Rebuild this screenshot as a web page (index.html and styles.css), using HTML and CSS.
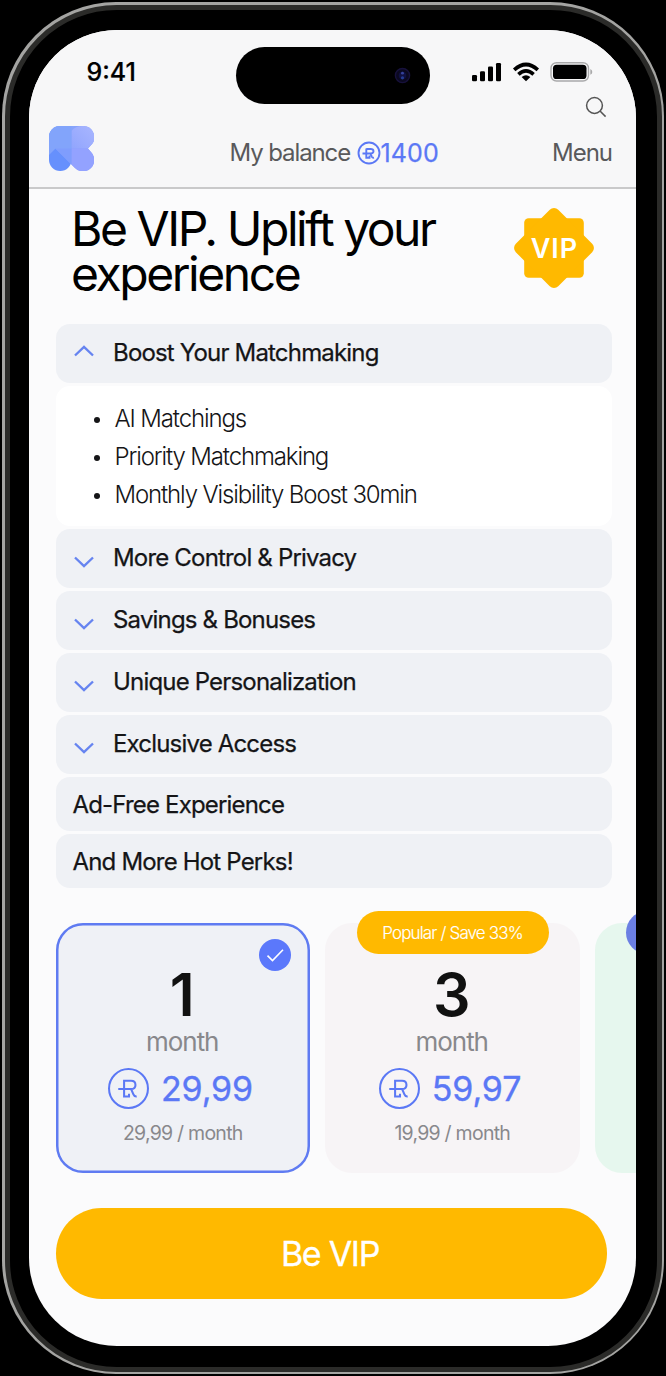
FILE: index.html
```html
<!DOCTYPE html>
<html lang="en">
<head>
<meta charset="utf-8">
<title>Be VIP</title>
<link rel="stylesheet" href="styles.css">
</head>
<body>
<svg class="defs" aria-hidden="true">
  <symbol id="coin" viewBox="0 0 40 40">
    <circle cx="20" cy="20" r="19" fill="none" stroke="currentColor" stroke-width="2"/>
    <path d="M10 20.500H22.500M15.700 12.500H22.500Q26.800 12.500 26.800 16.500T22.500 20.500L24.800 25.800Q25.600 28 28 27.800M15.700 11.500V27.800H20.500V25" fill="none" stroke="currentColor" stroke-width="2"/>
  </symbol>
  <symbol id="chevron" viewBox="0 0 20 12">
    <path d="M1 1.500L10 10L19 1.500" fill="none" stroke="currentColor" stroke-width="2.400"/>
  </symbol>
</svg>
<div class="phone">
 <div class="bezel">
  <main class="screen">
   <header class="header">
    <div class="status">
      <span class="time">9:41</span>
      <div class="island"><svg class="camera" viewBox="0 0 18 18"><circle cx="9" cy="9" r="7.500" fill="#0b0920" stroke="#17113c" stroke-width="1.500"/><circle cx="9" cy="9" r="4" fill="#101040"/><circle cx="9" cy="6.500" r="1.500" fill="#35429b"/><circle cx="9" cy="11.500" r="1.700" fill="#243b91"/></svg></div>
      <svg class="signals" viewBox="0 0 122 20">
        <g fill="#000">
          <rect x="0" y="13" width="5" height="6.300" rx="1.300"/><rect x="8" y="9.300" width="5" height="10" rx="1.300"/><rect x="16" y="4.500" width="5" height="14.800" rx="1.300"/><rect x="24" y="1" width="5" height="18.300" rx="1.300"/>
          <path d="M54 19.300L49.600 14.900Q54 11.600 58.400 14.900Z"/>
        </g>
        <g fill="none" stroke="#000" stroke-width="3.600"><path d="M42.200 7.900Q54 -2.900 65.800 7.900"/><path d="M46.400 12.400Q54 5.400 61.600 12.400"/></g>
        <rect x="79" y=".7" width="37.500" height="18.300" rx="5.500" fill="none" stroke="#a9a9aa" stroke-width="1.400"/>
        <rect x="81" y="2.700" width="33.500" height="14.300" rx="3.600"/>
        <path d="M118.300 7Q120.300 8 120.300 9.900T118.300 12.800Z" fill="#a9a9aa"/>
      </svg>
    </div>
    <div class="search-row"><svg class="search" viewBox="0 0 22 22"><circle cx="9.500" cy="9.500" r="7.900"/><path d="M15 15L20.600 20.600"/></svg></div>
    <nav class="nav">
      <svg class="logo" viewBox="0 0 45 45">
        <defs>
          <linearGradient id="band" x1="0" y1="0" x2="1" y2="1"><stop offset="0" stop-color="#88abfb"/><stop offset=".45" stop-color="#87a0fc"/><stop offset="1" stop-color="#8f9eff"/></linearGradient>
          <linearGradient id="lobe" x1="0" y1="1" x2="1" y2="0"><stop offset="0" stop-color="#91a5fd"/><stop offset="1" stop-color="#a9b6ff"/></linearGradient>
        </defs>
        <rect width="22.500" height="45" rx="11.200" fill="#6690fd"/>
        <path d="M11.200 0H34A11.200 11.200 0 0 1 42 19.200L39 22.500L42 26A11.200 11.200 0 1 1 26 42L3.200 19.200A11.200 11.200 0 0 1 11.200 0Z" fill="url(#band)"/>
        <path d="M22.500 5Q26 0 34 0A11.200 11.200 0 0 1 42 19.200L38.800 22.500H22.500Z" fill="url(#lobe)"/>
        <path d="M22.500 22.500H38.800L42 26A11.200 11.200 0 1 1 26 42L22.500 38.500Z" fill="#93a2ff"/>
        <path d="M0 11.200A11.200 11.200 0 0 1 11.200 0H22.500V22.500H6.500L0 29Z" fill="#82a4fb"/>
        <path d="M6.500 22.500H22.500V38.500Z" fill="#7f9dfd"/>
      </svg>
      <p class="balance"><span class="balance-label">My balance</span><svg class="coin-small" viewBox="0 0 24 24"><circle cx="12" cy="12" r="10.500"/><path d="M5.500 12.500H13.500M9.300 8H13.500Q16.500 8 16.500 10.200T13.500 12.500L14.900 15.800Q15.500 17 17 16.600M9.300 7.500V16.700H12.500V14.500"/></svg><b>1400</b></p>
      <span class="menu">Menu</span>
    </nav>
   </header>

   <section class="hero">
     <h1>Be VIP. Uplift your<br>experience</h1>
     <div class="badge">
       <svg viewBox="0 0 82 82"><g fill="#ffb900"><rect x="11.200" y="11.200" width="59.600" height="59.600" rx="4.500"/><rect x="11" y="11" width="60" height="60" rx="6" transform="rotate(45 41 41)"/></g></svg>
       <span>VIP</span>
     </div>
   </section>

   <section class="perks">
     <div class="perk"><svg class="chev up"><use href="#chevron"/></svg><span>Boost Your Matchmaking</span></div>
     <ul class="details"><li>AI Matchings</li><li>Priority Matchmaking</li><li>Monthly Visibility Boost 30min</li></ul>
     <div class="perk"><svg class="chev"><use href="#chevron"/></svg><span>More Control &amp; Privacy</span></div>
     <div class="perk"><svg class="chev"><use href="#chevron"/></svg><span>Savings &amp; Bonuses</span></div>
     <div class="perk"><svg class="chev"><use href="#chevron"/></svg><span>Unique Personalization</span></div>
     <div class="perk"><svg class="chev"><use href="#chevron"/></svg><span>Exclusive Access</span></div>
     <div class="perk plain"><span>Ad-Free Experience</span></div>
     <div class="perk plain"><span>And More Hot Perks!</span></div>
   </section>

   <section class="plans">
     <article class="plan selected">
       <svg class="check" viewBox="0 0 32 32"><circle cx="16" cy="16" r="16" fill="#5b78fb"/><path d="M8.500 16.700L13.500 21.500L24 10.700" fill="none" stroke="#fff" stroke-width="1.600"/></svg>
       <strong>1</strong><span class="unit">month</span>
       <div class="price"><svg><use href="#coin"/></svg><span>29,99</span></div>
       <small>29,99 / month</small>
     </article>
     <article class="plan rose">
       <span class="tag">Popular / Save 33%</span>
       <strong>3</strong><span class="unit">month</span>
       <div class="price"><svg><use href="#coin"/></svg><span>59,97</span></div>
       <small>19,99 / month</small>
     </article>
     <article class="plan mint"><span class="tag blue"></span></article>
   </section>

   <button class="cta">Be VIP</button>
  </main>
 </div>
</div>
</body>
</html>
```
FILE: styles.css
```css
* { box-sizing: border-box; }
body {
  margin: 0;
  padding: 2px;
  background: #000;
  font-family: Inter, "Liberation Sans", sans-serif;
  color: #151517;
}
h1, p, ul { margin: 0; padding: 0; }
.defs { position: absolute; width: 0; height: 0; }

.phone {
  width: 662px;
  height: 1372px;
  padding: 2.5px;
  border-radius: 114px;
  background: #a4a4a2;
}
.bezel {
  height: 100%;
  padding: 20.500px;
  padding-bottom: 21px;
  border: 5px solid #2b2b29;
  border-radius: 111.500px;
  background: #000;
}
.screen {
  height: 1315.500px;
  width: 607px;
  margin-left: -1px;
  border-radius: 88px;
  overflow: hidden;
  background: #fbfbfc;
}

.header {
  height: 158.500px;
  background: #f7f7f8;
  border-bottom: 2px solid #c9c9ca;
}
.status {
  display: grid;
  grid-template-columns: 207px 194px 1fr;
  height: 66px;
}
.time {
  padding: 27px 0 0 57.500px;
  font-size: 25px;
  line-height: 30px;
  font-weight: 500;
  letter-spacing: 0;
  color: #000;
  -webkit-text-stroke: .2px #000;
}
.island {
  height: 57px;
  margin-top: 17px;
  padding: 20px 0 0 158px;
  border-radius: 29px;
  background: #000;
}
.camera { display: block; width: 17px; height: 17px; }
.signals { width: 122px; height: 20px; margin: 31.500px 0 0 42px; }
.search-row { display: flex; justify-content: flex-end; height: 26px; padding-right: 29px; }
.search { width: 22px; height: 22px; fill: none; stroke: #555; stroke-width: 1.500; }
.nav {
  display: grid;
  grid-template-columns: 181px 1fr auto;
  align-items: start;
  padding: 4px 24px 0 19.500px;
  color: #59595b;
  font-size: 24px;
  line-height: 30px;
}
.logo { width: 45px; height: 45px; }
.balance { display: flex; align-items: center; padding-top: 11.500px; }
.balance-label { width: 127px; letter-spacing: -1.100px; white-space: nowrap; }
.coin-small { width: 24px; height: 24px; fill: none; stroke: #5b78f5; stroke-width: 1.900; }
.balance b {
  font-weight: 400;
  font-size: 25px;
  letter-spacing: .1px;
  color: #5b78f5;
  -webkit-text-stroke: .25px #5b78f5;
}
.menu { padding-top: 11.500px; letter-spacing: -1px; }

.hero {
  display: flex;
  justify-content: space-between;
  height: 135.500px;
  padding: 18.500px 41.500px 0 42px;
}
h1 {
  font-size: 48px;
  line-height: 44.500px;
  font-weight: 400;
  letter-spacing: -2.450px;
  color: #000;
  white-space: nowrap;
}
.badge { display: grid; width: 82px; height: 82px; place-items: center; }
.badge > * { grid-area: 1 / 1; }
.badge svg { width: 82px; height: 82px; }
.badge span { color: #fff; font-size: 27px; font-weight: 600; letter-spacing: 1px; padding-left: 2px; }

.perks { display: flex; flex-direction: column; gap: 3px; margin: 0 24.500px 0 26.500px; }
.perk {
  display: flex;
  align-items: center;
  height: 59px;
  padding: 0 0 2.500px 18.500px;
  border-radius: 14px;
  background: #eff1f5;
  font-size: 24px;
  font-weight: 400;
  letter-spacing: -.820px;
  -webkit-text-stroke: .25px #151517;
}
.perk.plain { height: 54px; padding-bottom: 0; padding-left: 17px; }
.chev { width: 20px; height: 12px; margin: 9px 19px 0 0; color: #6684f0; }
.chev.up { transform: scaleY(-1); margin: 0 19px 3px 0; }
.details {
  height: 140px;
  padding: 13.500px 0 0 38px;
  border-radius: 14px;
  background: #fff;
  font-size: 24px;
  line-height: 38px;
  font-weight: 300;
  letter-spacing: -1.130px;
  list-style: none;
}
.details li { display: flex; align-items: center; gap: 15px; }
.details li::before { content: ""; width: 6px; height: 6px; margin-top: 3px; border-radius: 50%; background: #151517; }

.plans { display: flex; gap: 15px; padding: 35px 0 0 26.500px; }
.plan {
  position: relative;
  display: flex;
  flex: none;
  flex-direction: column;
  align-items: center;
  width: 254.500px;
  height: 250px;
  padding-top: 42px;
  border-radius: 27px;
}
.selected { background: #eff1f6; box-shadow: inset 0 0 0 2.500px #5f7bf2; }
.rose { background: #f7f4f6; }
.mint { background: #e6f7ee; }
.check { position: absolute; top: 16px; right: 19px; width: 32px; height: 32px; }
.plan strong { margin-left: -1px; font-size: 59px; line-height: 60px; font-weight: 600; color: #111; }
.unit { margin: 2px 0 0 -1px; font-size: 26px; line-height: 30px; letter-spacing: -1.050px; color: #88888c; }
.price { display: flex; align-items: center; gap: 11.500px; margin: 10.500px 0 0 -4px; height: 42px; color: #5b78f5; }
.price svg { width: 41px; height: 41px; }
.price span { font-size: 34px; font-weight: 400; letter-spacing: -.100px; -webkit-text-stroke: .35px #5b78f5; }
.plan small { margin-top: 11.500px; font-size: 19.500px; line-height: 24px; letter-spacing: -.750px; color: #88888c; }
.tag {
  position: absolute;
  top: -12.500px;
  left: 31.500px;
  width: 192px;
  height: 43px;
  border-radius: 22px;
  background: #ffb900;
  color: #fff;
  font-size: 17px;
  line-height: 45px;
  font-weight: 300;
  letter-spacing: -.850px;
  text-align: center;
  -webkit-text-stroke: .15px #fff;
}
.tag.blue { background: #6b7fe3; }
.cta {
  display: block;
  width: 551px;
  height: 91px;
  margin: 35px 0 0 26.500px;
  padding: 0 8px 0 6px;
  border: 0;
  border-radius: 46px;
  background: #ffb900;
  color: #fff;
  font: 400 34px Inter, sans-serif;
  letter-spacing: -1.300px;
  -webkit-text-stroke: .3px #fff;
}
```
